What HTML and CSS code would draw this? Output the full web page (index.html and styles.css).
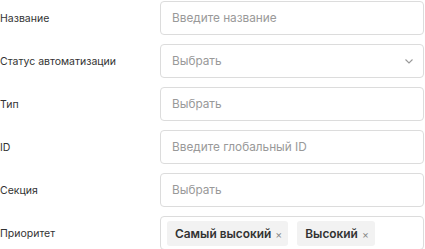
FILE: index.html
```html
<!doctype html>
<html lang="ru">
<head>
  <meta charset="utf-8">
  <title>Форма</title>
  <link rel="stylesheet" href="styles.css">
</head>
<body>
  <form class="form">
    <div class="form-row">
      <label class="form-label">Название</label>
      <div class="field"><span class="placeholder">Введите название</span></div>
    </div>
    <div class="form-row">
      <label class="form-label">Статус автоматизации</label>
      <div class="field field-select">
        <span class="placeholder">Выбрать</span>
        <svg class="chevron" width="8" height="5" viewBox="0 0 8 5"><path d="M0.5 0.5l3.5 3.5 3.5-3.5" fill="none" stroke="#999" stroke-width="1.1"/></svg>
      </div>
    </div>
    <div class="form-row">
      <label class="form-label">Тип</label>
      <div class="field"><span class="placeholder">Выбрать</span></div>
    </div>
    <div class="form-row">
      <label class="form-label">ID</label>
      <div class="field"><span class="placeholder">Введите глобальный ID</span></div>
    </div>
    <div class="form-row">
      <label class="form-label">Секция</label>
      <div class="field"><span class="placeholder">Выбрать</span></div>
    </div>
    <div class="form-row">
      <label class="form-label">Приоритет</label>
      <div class="field field-tags">
        <span class="tag">Самый высокий <span class="tag-close">×</span></span>
        <span class="tag">Высокий <span class="tag-close">×</span></span>
      </div>
    </div>
  </form>
</body>
</html>
```

FILE: styles.css
```css
* { box-sizing: border-box; }

body {
  margin: 0;
  background: #fff;
  font-family: Inter, "Noto Sans", sans-serif;
  color: #333;
}

.form {
  display: flex;
  flex-direction: column;
  gap: 9px;
  padding-top: 1px;
}

.form-row {
  display: grid;
  grid-template-columns: 160px 264px;
  align-items: center;
}

.form-label {
  font-size: 10.5px;
  color: #333;
}

.field {
  height: 34px;
  border: 1px solid #dcdcdc;
  border-radius: 4px;
  display: flex;
  align-items: center;
  padding: 0 11px;
}

.placeholder {
  font-size: 11.8px;
  color: #999;
}

.field-select {
  justify-content: space-between;
  padding-right: 10px;
}

.field-tags {
  padding: 0 6px;
  gap: 9px;
}

.tag {
  background: #f2f2f2;
  border-radius: 3px;
  padding: 5px 6px 5px 8px;
  font-size: 11.9px;
  font-weight: 600;
  color: #333;
}
.tag-close {
  font-weight: 400;
  font-size: 10.5px;
  color: #888;
  margin-left: 1px;
}
```
